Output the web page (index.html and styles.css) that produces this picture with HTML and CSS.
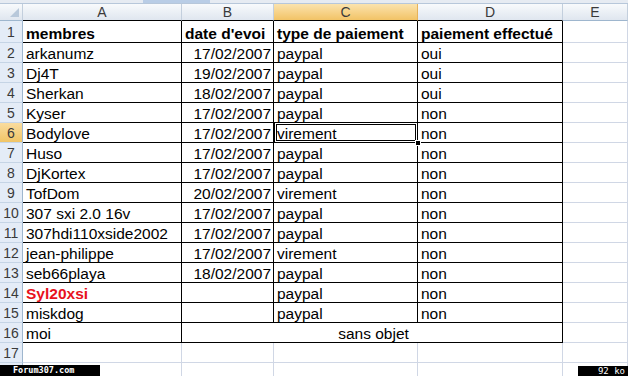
FILE: index.html
```html
<!DOCTYPE html>
<html>
<head>
<meta charset="utf-8">
<link rel="stylesheet" href="styles.css">
</head>
<body>
<div class="page">
  <div class="topbar"><span class="tab"></span></div>
  <div class="sheet">
    <div class="hd corner"></div>
    <div class="hd tb">A</div>
    <div class="hd tb">B</div>
    <div class="hd tb sel">C</div>
    <div class="hd tb">D</div>
    <div class="hd">E</div>

    <div class="rh">1</div>
    <div class="c t b">membres</div>
    <div class="c t b">date d'evoi</div>
    <div class="c t b">type de paiement</div>
    <div class="c t b">paiement effectué</div>
    <div class="c"></div>

    <div class="rh">2</div>
    <div class="c t">arkanumz</div>
    <div class="c t num">17/02/2007</div>
    <div class="c t">paypal</div>
    <div class="c t">oui</div>
    <div class="c"></div>

    <div class="rh">3</div>
    <div class="c t">Dj4T</div>
    <div class="c t num">19/02/2007</div>
    <div class="c t">paypal</div>
    <div class="c t">oui</div>
    <div class="c"></div>

    <div class="rh">4</div>
    <div class="c t">Sherkan</div>
    <div class="c t num">18/02/2007</div>
    <div class="c t">paypal</div>
    <div class="c t">oui</div>
    <div class="c"></div>

    <div class="rh">5</div>
    <div class="c t">Kyser</div>
    <div class="c t num">17/02/2007</div>
    <div class="c t">paypal</div>
    <div class="c t">non</div>
    <div class="c"></div>

    <div class="rh selrow">6</div>
    <div class="c t">Bodylove</div>
    <div class="c t num">17/02/2007</div>
    <div class="c t active">virement<span class="selbox"></span><span class="handle"></span></div>
    <div class="c t">non</div>
    <div class="c"></div>

    <div class="rh">7</div>
    <div class="c t">Huso</div>
    <div class="c t num">17/02/2007</div>
    <div class="c t">paypal</div>
    <div class="c t">non</div>
    <div class="c"></div>

    <div class="rh">8</div>
    <div class="c t">DjKortex</div>
    <div class="c t num">17/02/2007</div>
    <div class="c t">paypal</div>
    <div class="c t">non</div>
    <div class="c"></div>

    <div class="rh">9</div>
    <div class="c t">TofDom</div>
    <div class="c t num">20/02/2007</div>
    <div class="c t">virement</div>
    <div class="c t">non</div>
    <div class="c"></div>

    <div class="rh">10</div>
    <div class="c t">307 sxi 2.0 16v</div>
    <div class="c t num">17/02/2007</div>
    <div class="c t">paypal</div>
    <div class="c t">non</div>
    <div class="c"></div>

    <div class="rh">11</div>
    <div class="c t">307hdi110xside2002</div>
    <div class="c t num">17/02/2007</div>
    <div class="c t">paypal</div>
    <div class="c t">non</div>
    <div class="c"></div>

    <div class="rh">12</div>
    <div class="c t">jean-philippe</div>
    <div class="c t num">17/02/2007</div>
    <div class="c t">virement</div>
    <div class="c t">non</div>
    <div class="c"></div>

    <div class="rh">13</div>
    <div class="c t">seb66playa</div>
    <div class="c t num">18/02/2007</div>
    <div class="c t">paypal</div>
    <div class="c t">non</div>
    <div class="c"></div>

    <div class="rh">14</div>
    <div class="c t b red">Syl20xsi</div>
    <div class="c t num"></div>
    <div class="c t">paypal</div>
    <div class="c t">non</div>
    <div class="c"></div>

    <div class="rh">15</div>
    <div class="c t">miskdog</div>
    <div class="c t num"></div>
    <div class="c t">paypal</div>
    <div class="c t">non</div>
    <div class="c"></div>

    <div class="rh">16</div>
    <div class="c t">moi</div>
    <div class="c t merged">sans objet</div>
    <div class="c"></div>

    <div class="rh">17</div>
    <div class="c"></div>
    <div class="c"></div>
    <div class="c"></div>
    <div class="c"></div>
    <div class="c"></div>

    <div class="rh"></div>
    <div class="c"></div>
    <div class="c"></div>
    <div class="c"></div>
    <div class="c"></div>
    <div class="c"></div>
  </div>
  <div class="wm wm-left">Forum307.com</div>
  <div class="wm wm-right">92 ko</div>
</div>
</body>
</html>
```

FILE: styles.css
```css
* { box-sizing: border-box; }
html, body { margin: 0; padding: 0; background: #fff; }
.page {
  position: relative;
  width: 628px;
  height: 376px;
  overflow: hidden;
  font-family: "Liberation Sans", Arial, sans-serif;
}
.topbar {
  height: 4px;
  background: #e6ebf2;
  border-bottom: 1px solid #b7c7da;
  position: relative;
}
.topbar .tab {
  position: absolute;
  left: 143px;
  width: 67px;
  top: 0;
  height: 3px;
  background: #b9cde6;
}
.sheet {
  display: grid;
  grid-template-columns: 23px 159px 92px 144px 145px 65px;
  grid-template-rows: 17px 22px repeat(17, 20px);
}
.hd {
  background: linear-gradient(#f8fafc, #dfe6ef);
  border-right: 1px solid #c3cfdd;
  border-bottom: 1px solid #9eb6ce;
  color: #3a3a3a;
  font-size: 14px;
  line-height: 16px;
  text-align: center;
}
.hd.tb { border-bottom-color: #000; }
.hd.sel {
  background: linear-gradient(#fbe3ae, #f2c366);
  border-right-color: #e6b25a;
}
.corner { position: relative; }
.corner::after {
  content: "";
  position: absolute;
  right: 3px;
  bottom: 3px;
  border-left: 9px solid transparent;
  border-bottom: 9px solid #b8c8da;
}
.rh {
  background: #e4ecf7;
  border-right: 1px solid #9eb6ce;
  border-bottom: 1px solid #c5d4e5;
  color: #3a3a3a;
  font-size: 14px;
  display: flex;
  align-items: center;
  justify-content: center;
}
.rh.selrow { background: linear-gradient(#f9dc9f, #f1c566); }
.c {
  border-right: 1px solid #d0d7e5;
  border-bottom: 1px solid #d0d7e5;
  font-size: 15.5px;
  line-height: 16px;
  color: #000;
  padding: 0 3px;
  display: flex;
  align-items: flex-end;
  white-space: nowrap;
  overflow: visible;
}
.c.t { border-right-color: #000; border-bottom-color: #000; }
.c.num { justify-content: flex-end; padding-right: 2px; }
.c.b { font-weight: bold; }
.c.red { color: #e8121d; }
.c.merged { grid-column: span 3; justify-content: center; padding-left: 6px; }
.active { position: relative; }
.selbox {
  position: absolute;
  left: 0;
  top: -1px;
  right: -1px;
  bottom: -1px;
  border: 1px solid #000;
  box-shadow: inset 0 0 0 1px #fff, inset 0 0 0 2px #000;
}
.handle {
  position: absolute;
  right: -4px;
  bottom: -4px;
  width: 6px;
  height: 6px;
  background: #000;
  border: 1px solid #fff;
}
.wm {
  position: absolute;
  bottom: 0;
  height: 11px;
  background: #000;
  color: #fff;
  font-family: "DejaVu Sans Mono", monospace;
  font-weight: bold;
  font-size: 8.5px;
  line-height: 10px;
}
.wm-left { left: 0; width: 100px; padding-left: 13px; }
.wm-right { right: 0; width: 50px; height: 10px; text-align: right; padding-right: 3px; font-weight: normal; font-size: 9px; }
```
